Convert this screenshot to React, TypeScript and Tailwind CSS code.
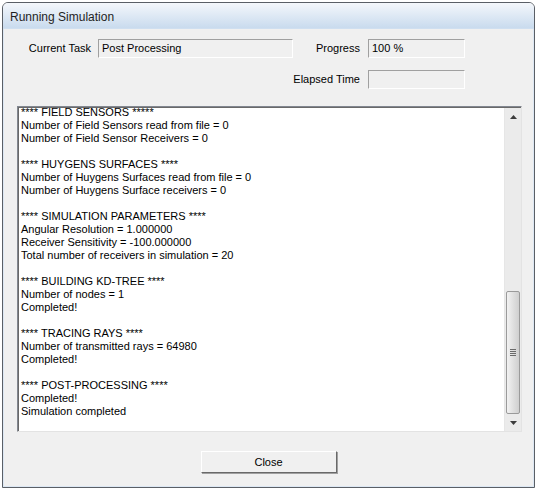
import React from "react";

const logLines: string[] = [
  "**** FIELD SENSORS *****",
  "Number of Field Sensors read from file = 0",
  "Number of Field Sensor Receivers = 0",
  "",
  "**** HUYGENS SURFACES ****",
  "Number of Huygens Surfaces read from file = 0",
  "Number of Huygens Surface receivers = 0",
  "",
  "**** SIMULATION PARAMETERS ****",
  "Angular Resolution = 1.000000",
  "Receiver Sensitivity = -100.000000",
  "Total number of receivers in simulation = 20",
  "",
  "**** BUILDING KD-TREE ****",
  "Number of nodes = 1",
  "Completed!",
  "",
  "**** TRACING RAYS ****",
  "Number of transmitted rays = 64980",
  "Completed!",
  "",
  "**** POST-PROCESSING ****",
  "Completed!",
  "Simulation completed",
];

function Field({ value, className }: { value?: string; className: string }) {
  return (
    <div
      className={`h-[19px] border border-t-[#a0a0a0] border-l-[#a0a0a0] border-r-white border-b-white bg-[#f0f0f0] pl-[3px] leading-[17px] ${className}`}
    >
      {value}
    </div>
  );
}

function Scrollbar() {
  return (
    <div className="flex w-[17px] flex-col border-l border-[#e6e6e6] bg-[#ebebeb]">
      <div className="flex h-[17px] items-center justify-center">
        <svg width="7" height="4" viewBox="0 0 7 4">
          <path d="M3.5 0 L7 4 L0 4 Z" fill="#3c3c3c" />
        </svg>
      </div>
      <div className="relative flex-1">
        <div className="absolute left-[1px] top-[166px] flex h-[123px] w-[14px] items-center justify-center rounded-[2px] border border-[#9a9a9a] bg-gradient-to-r from-[#f2f2f2] via-[#e0e0e0] to-[#cfcfcf]">
          <div className="flex flex-col gap-[1px]">
            <div className="h-px w-[6px] bg-[#6a6a6a]" />
            <div className="h-px w-[6px] bg-[#6a6a6a]" />
            <div className="h-px w-[6px] bg-[#6a6a6a]" />
            <div className="h-px w-[6px] bg-[#6a6a6a]" />
          </div>
        </div>
      </div>
      <div className="flex h-[17px] items-center justify-center">
        <svg width="7" height="4" viewBox="0 0 7 4">
          <path d="M0 0 L7 0 L3.5 4 Z" fill="#3c3c3c" />
        </svg>
      </div>
    </div>
  );
}

export default function App() {
  return (
    <div className="h-[493px] w-[541px] bg-white pl-[2px] pt-[2px] text-[11px] text-black [font-family:'Liberation_Sans',Arial,sans-serif]">
      <div className="flex h-[486px] w-[533px] flex-col overflow-hidden rounded-t-[6px] border border-[#5a5f66] bg-[#f0f0f0]">
        <div className="flex h-[26px] items-center border-b border-[#cfdff0] bg-gradient-to-b from-[#f4f7fb] to-[#c9dbee] pl-[7px] pt-[2px] text-[12px] text-[#1e1e1e]">
          Running Simulation
        </div>

        <div className="flex flex-1 flex-col border-x border-b border-[#dce7f3] pt-[10px]">
          <div className="flex items-center">
            <div className="w-[87px] text-right">Current Task</div>
            <Field value="Post Processing" className="ml-[7px] w-[195px]" />
            <div className="w-[67px] text-right">Progress</div>
            <Field value="100 %" className="ml-[8px] w-[97px]" />
          </div>
          <div className="mt-[12px] flex items-center">
            <div className="w-[356px] text-right">Elapsed Time</div>
            <Field className="ml-[8px] w-[97px]" />
          </div>

          <div className="ml-[13px] mt-[17px] flex h-[326px] w-[505px] border border-t-[#828790] border-l-[#828790] border-r-[#e3e3e3] border-b-[#e3e3e3] bg-white">
            <div className="flex flex-1 overflow-hidden border-t border-l border-[#696969]">
              <div className="flex-1 overflow-hidden pl-[2px] leading-[13px]">
                <div className="-mt-[2px]">
                  {logLines.map((line, i) => (
                    <div key={i} className="h-[13px] whitespace-pre">
                      {line}
                    </div>
                  ))}
                </div>
              </div>
              <Scrollbar />
            </div>
          </div>

          <div className="mt-[19px] flex justify-center">
            <button className="h-[22px] w-[136px] border border-t-white border-l-white border-r-[#696969] border-b-[#696969] bg-[#f0f0f0] shadow-[1px_1px_0_#a0a0a0] text-[11px]">
              Close
            </button>
          </div>
        </div>
      </div>
    </div>
  );
}
